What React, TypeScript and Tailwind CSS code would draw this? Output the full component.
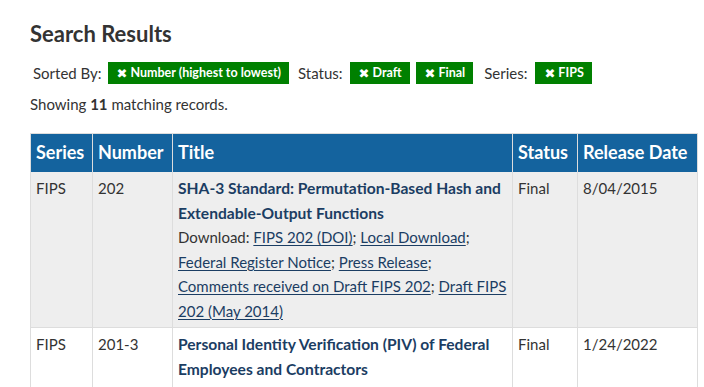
const font = { fontFamily: 'Lato, "Liberation Sans", sans-serif' }

function Badge({ label }: { label: string }) {
  return (
    <span className="inline-flex items-center h-[22px] pl-[9px] pr-[8px] bg-[#008000] text-white text-[12.5px] font-bold leading-none">
      <span className="mr-[3px] text-[13px] font-['DejaVu_Sans',sans-serif]">✖</span>
      {label}
    </span>
  )
}

function A({ children }: { children: React.ReactNode }) {
  return <span className="underline underline-offset-2 decoration-1 text-[#1b3d63]">{children}</span>
}

export default function App() {
  return (
    <div className="bg-white text-[#333] w-[704px] h-[387px] overflow-hidden pl-[30px] pt-[21px]" style={font}>
      <h1 className="text-[22px] font-bold leading-[26px] text-[#333]">Search Results</h1>
      <div className="flex items-center gap-[6px] mt-[15px] text-[15px] pl-[3px]">
        <span>Sorted By:</span>
        <Badge label="Number (highest to lowest)" />
        <span className="ml-[3px] mr-[1px]">Status:</span>
        <Badge label="Draft" />
        <Badge label="Final" />
        <span className="ml-[5px] mr-[2px]">Series:</span>
        <Badge label="FIPS" />
      </div>
      <p className="text-[15px] mt-[8px] leading-[22px]">
        Showing <b>11</b> matching records.
      </p>
      <table className="table-fixed border-collapse mt-[18px] w-[667px] border border-[#dddddd] text-[15px]">
        <colgroup>
          <col className="w-[62px]" />
          <col className="w-[80px]" />
          <col className="w-[340px]" />
          <col className="w-[65px]" />
          <col className="w-[120px]" />
        </colgroup>
        <thead>
          <tr className="bg-[#14639e] text-white text-[18px] font-bold h-[39px]">
            <th className="text-left px-[5px] border-r border-[#dddddd] whitespace-nowrap">Series</th>
            <th className="text-left px-[5px] border-r border-[#dddddd] whitespace-nowrap">Number</th>
            <th className="text-left px-[5px] border-r border-[#dddddd]">Title</th>
            <th className="text-left px-[5px] border-r border-[#dddddd] whitespace-nowrap">Status</th>
            <th className="text-left px-[5px] whitespace-nowrap">Release Date</th>
          </tr>
        </thead>
        <tbody className="leading-[24.5px]">
          <tr className="bg-[#eeeeee] align-top border-b border-[#dddddd]">
            <td className="px-[5px] pt-[4px] pb-[4px] border-r border-[#dddddd]">FIPS</td>
            <td className="px-[5px] pt-[4px] border-r border-[#dddddd]">202</td>
            <td className="px-[5px] pt-[4px] pb-[4px] border-r border-[#dddddd] whitespace-nowrap">
              <div className="font-bold text-[15.6px] text-[#1b3d63]">
                SHA-3 Standard: Permutation-Based Hash and
                <br />
                Extendable-Output Functions
              </div>
              <div>
                Download: <A>FIPS 202 (DOI)</A>; <A>Local Download</A>;
                <br />
                <A>Federal Register Notice</A>; <A>Press Release</A>;
                <br />
                <A>Comments received on Draft FIPS 202</A>; <A>Draft FIPS</A>
                <br />
                <A>202 (May 2014)</A>
              </div>
            </td>
            <td className="px-[5px] pt-[4px] border-r border-[#dddddd]">Final</td>
            <td className="px-[5px] pt-[4px]">8/04/2015</td>
          </tr>
          <tr className="bg-white align-top">
            <td className="px-[5px] pt-[4px] pb-[4px] border-r border-[#dddddd]">FIPS</td>
            <td className="px-[5px] pt-[4px] border-r border-[#dddddd]">201-3</td>
            <td className="px-[5px] pt-[4px] pb-[4px] border-r border-[#dddddd] whitespace-nowrap">
              <div className="font-bold text-[15.6px] text-[#1b3d63]">
                Personal Identity Verification (PIV) of Federal
                <br />
                Employees and Contractors
              </div>
              <div>
                Download: <A>FIPS 201-3 (DOI)</A>; <A>Local Download</A>;
              </div>
            </td>
            <td className="px-[5px] pt-[4px] border-r border-[#dddddd]">Final</td>
            <td className="px-[5px] pt-[4px]">1/24/2022</td>
          </tr>
        </tbody>
      </table>
    </div>
  )
}
